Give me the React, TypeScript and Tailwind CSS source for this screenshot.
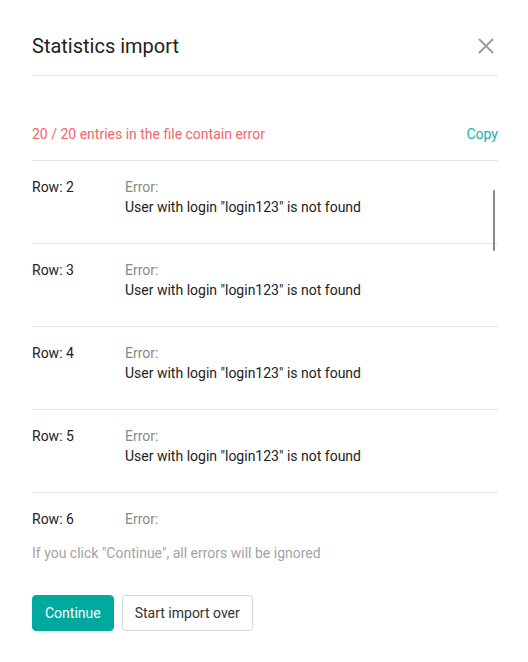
import React from 'react';

const rows = Array.from({ length: 20 }, (_, i) => ({
  row: i + 2,
  message: 'User with login "login123" is not found',
}));

export default function App() {
  return (
    <div
      className="w-[528px] h-[662px] bg-white pl-8 pr-[30px] pt-8"
      style={{ fontFamily: 'Roboto, "Noto Sans", sans-serif' }}
    >
      {/* Header */}
      <div className="flex items-center justify-between border-b border-[#e4e4e4] pb-[15px]">
        <h2 className="text-[20px] leading-[28px] text-[#222]">Statistics import</h2>
        <button className="mr-1 flex h-7 w-4 items-center justify-center text-[#9e9e9e]">
          <svg width="16" height="16" viewBox="0 0 16 16" fill="none">
            <path d="M1 1L15 15M15 1L1 15" stroke="currentColor" strokeWidth="2" />
          </svg>
        </button>
      </div>

      {/* Summary */}
      <div className="mt-[48px] flex items-center justify-between border-b border-[#e4e4e4] pb-4 text-sm leading-5">
        <span className="text-[#f4646b]">20 / 20 entries in the file contain error</span>
        <button className="text-[#14b3b0]">Copy</button>
      </div>

      {/* Error list */}
      <div className="relative h-[370px] overflow-hidden">
        {rows.map(r => (
          <div
            key={r.row}
            className="flex border-b border-[#e4e4e4] pt-[16px] pb-[26px] text-sm leading-5"
          >
            <div className="w-[93px] shrink-0 text-[#222]">Row: {r.row}</div>
            <div>
              <div className="text-[#8a8a8a]">Error:</div>
              <div className="text-[#222]">{r.message}</div>
            </div>
          </div>
        ))}
        <div className="absolute right-[3px] top-[29px] h-[61px] w-[2px] rounded bg-[#85858c]" />
      </div>

      <p className="mt-3 text-sm leading-5 text-[#a3a3a3]">
        If you click "Continue", all errors will be ignored
      </p>

      {/* Actions */}
      <div className="mt-[32px] flex gap-2">
        <button className="h-9 rounded border border-[#00a99e] bg-[#00a99e] px-3 text-sm leading-5 text-white">
          Continue
        </button>
        <button className="h-9 rounded border border-[#d3d6db] bg-white px-3 text-sm leading-5 text-[#333]">
          Start import over
        </button>
      </div>
    </div>
  );
}
